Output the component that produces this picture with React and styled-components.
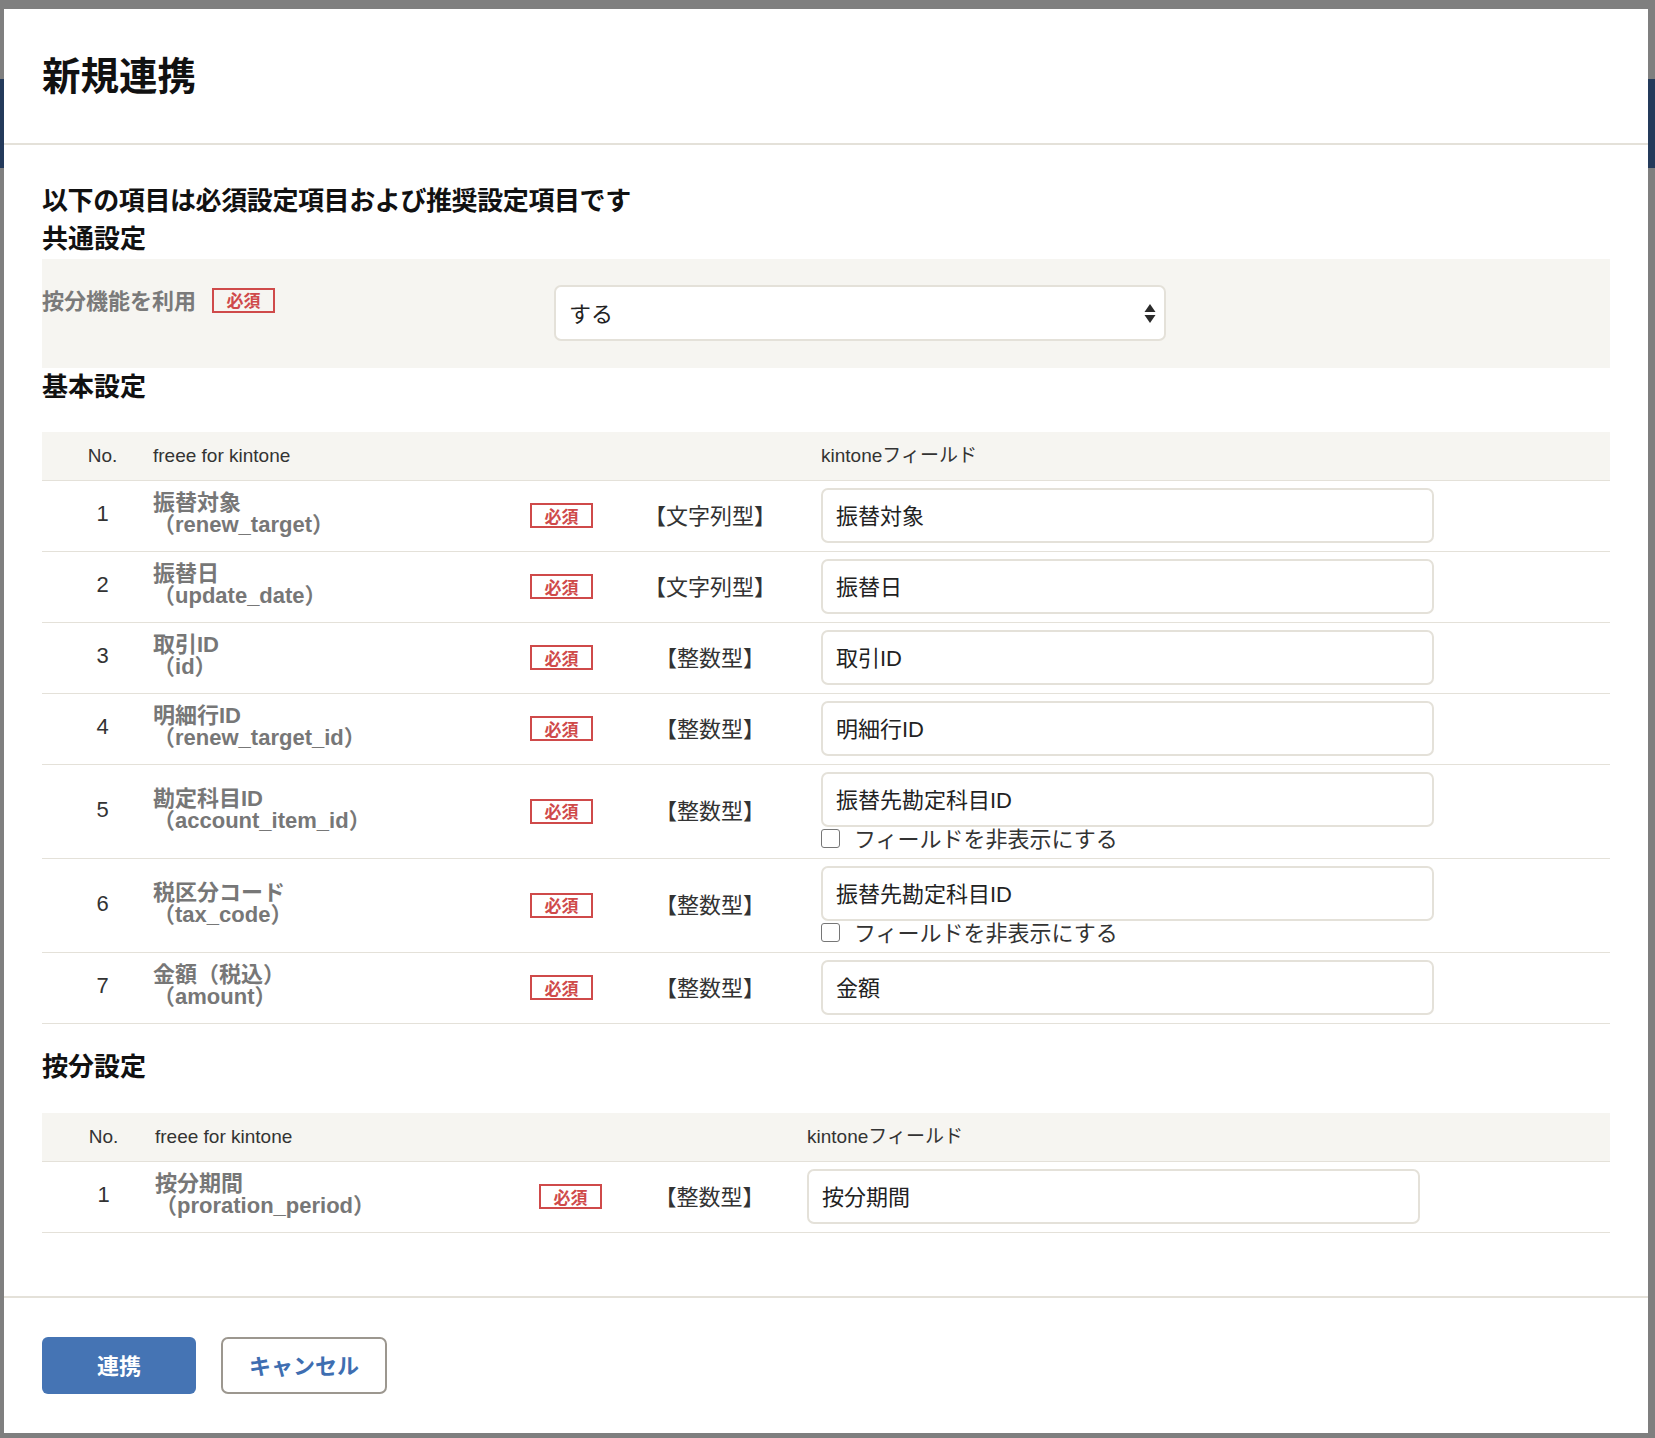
import React from 'react';
import styled, { createGlobalStyle } from 'styled-components';

const basicRows = [
  { no: 1, name: '振替対象', key: 'renew_target', type: '【文字列型】', field: '振替対象' },
  { no: 2, name: '振替日', key: 'update_date', type: '【文字列型】', field: '振替日' },
  { no: 3, name: '取引ID', key: 'id', type: '【整数型】', field: '取引ID' },
  { no: 4, name: '明細行ID', key: 'renew_target_id', type: '【整数型】', field: '明細行ID' },
  { no: 5, name: '勘定科目ID', key: 'account_item_id', type: '【整数型】', field: '振替先勘定科目ID', hide: true },
  { no: 6, name: '税区分コード', key: 'tax_code', type: '【整数型】', field: '振替先勘定科目ID', hide: true },
  { no: 7, name: '金額（税込）', key: 'amount', type: '【整数型】', field: '金額' },
];

const prorationRows = [
  { no: 1, name: '按分期間', key: 'proration_period', type: '【整数型】', field: '按分期間' },
];

const basicCols = '111px 377px 63px 228px 1fr';
const prorationCols = '113px 384px 64px 204px 1fr';

function MappingTable({ rows, cols, typePad }) {
  return (
    <Table>
      <HeadRow $cols={cols}>
        <NoCell>No.</NoCell>
        <HeadText>freee for kintone</HeadText>
        <span />
        <span />
        <HeadText $cjk>kintoneフィールド</HeadText>
      </HeadRow>
      {rows.map((r) => (
        <Row key={r.key} $cols={cols}>
          <NoCell $num>{r.no}</NoCell>
          <Name>
            <div>{r.name}</div>
            <div>（{r.key}）</div>
          </Name>
          <Badge>必須</Badge>
          <TypeCell $pad={typePad}>{r.type}</TypeCell>
          <FieldCell>
            <Field defaultValue={r.field} readOnly />
            {r.hide && (
              <HideLine>
                <Check type="checkbox" />
                <span>フィールドを非表示にする</span>
              </HideLine>
            )}
          </FieldCell>
        </Row>
      ))}
    </Table>
  );
}

function App() {
  return (
    <>
      <GlobalStyle />
      <Backdrop>
        <Modal>
          <Header>
            <Title>新規連携</Title>
          </Header>
          <Body>
            <Intro>以下の項目は必須設定項目および推奨設定項目です</Intro>
            <SectionTitle $top={0}>共通設定</SectionTitle>
            <Panel>
              <LabelGroup>
                <PanelLabel>按分機能を利用</PanelLabel>
                <Badge>必須</Badge>
              </LabelGroup>
              <Select>
                <span>する</span>
                <svg width="12" height="19" viewBox="0 0 12 19">
                  <path d="M6 0 L11.5 8 H0.5 Z" fill="#2b2b2b" />
                  <path d="M6 19 L11.5 11 H0.5 Z" fill="#2b2b2b" />
                </svg>
              </Select>
            </Panel>
            <SectionTitle $top={0} $bottom={26}>基本設定</SectionTitle>
            <MappingTable rows={basicRows} cols={basicCols} typePad={6} />
            <SectionTitle $top={24} $bottom={27}>按分設定</SectionTitle>
            <MappingTable rows={prorationRows} cols={prorationCols} typePad={9} />
          </Body>
          <Footer>
            <PrimaryButton>連携</PrimaryButton>
            <CancelButton>キャンセル</CancelButton>
          </Footer>
        </Modal>
      </Backdrop>
    </>
  );
}

export default App;

const GlobalStyle = createGlobalStyle`
  html, body {
    margin: 0;
    padding: 0;
  }
  body {
    background:
      linear-gradient(to bottom, #7f7f7f 0, #7f7f7f 79px, #243a5b 79px, #243a5b 168px, #7f7f7f 168px) no-repeat,
      #7f7f7f;
    font-family: 'Liberation Sans', 'Noto Sans CJK JP', sans-serif;
  }
`;

const Backdrop = styled.div`
  box-sizing: border-box;
  height: 1438px;
  padding: 9px 7px 5px 4px;
`;

const Modal = styled.div`
  height: 1424px;
  background: #fff;
  display: flex;
  flex-direction: column;
`;

const Header = styled.header`
  box-sizing: border-box;
  height: 136px;
  flex: none;
  display: flex;
  align-items: center;
  padding: 0 38px 6px;
  border-bottom: 2px solid #e4e1d9;
`;

const Title = styled.h1`
  margin: 0;
  font-size: 38.5px;
  font-weight: 700;
  color: #111;
`;

const Body = styled.main`
  flex: 1;
  padding: 37px 38px 0;
`;

const Intro = styled.p`
  margin: 0;
  font-size: 26px;
  line-height: 38px;
  letter-spacing: -0.4px;
  font-weight: 700;
  color: #111;
`;

const SectionTitle = styled.h2`
  margin: ${(p) => p.$top}px 0 ${(p) => p.$bottom || 1}px;
  font-size: 26px;
  line-height: 38px;
  font-weight: 700;
  color: #111;
`;

const Panel = styled.section`
  background: #f6f5f1;
  padding: 26px 0 27px;
  display: flex;
  align-items: flex-start;
`;

const LabelGroup = styled.div`
  width: 512px;
  display: flex;
  align-items: center;
  gap: 16px;
  height: 30px;
`;

const PanelLabel = styled.span`
  padding-bottom: 3px;
  font-size: 22px;
  font-weight: 700;
  color: #7a7a7a;
`;

const Badge = styled.span`
  box-sizing: border-box;
  width: 63px;
  height: 25px;
  padding-bottom: 1px;
  border: 2px solid #cf4a4a;
  color: #cf4a4a;
  font-size: 17px;
  font-weight: 700;
  display: flex;
  align-items: center;
  justify-content: center;
`;

const Select = styled.div`
  box-sizing: border-box;
  width: 612px;
  height: 56px;
  border: 2px solid #e4e1d9;
  border-radius: 7px;
  background: #fff;
  padding: 0 8px 0 13px;
  display: flex;
  align-items: center;
  justify-content: space-between;
  font-size: 22px;
  color: #222;

  span {
    padding-bottom: 3px;
  }
`;

const Table = styled.div`
  display: flex;
  flex-direction: column;
`;

const HeadRow = styled.div`
  display: grid;
  grid-template-columns: ${(p) => p.$cols};
  align-items: center;
  height: 48px;
  background: #f6f5f1;
  border-bottom: 1px solid #e4e1d9;
  font-size: 19px;
  color: #333;
`;

const HeadText = styled.span`
  white-space: nowrap;
  padding-bottom: ${(p) => (p.$cjk ? '5px' : '0')};
`;

const Row = styled.div`
  display: grid;
  grid-template-columns: ${(p) => p.$cols};
  align-items: center;
  padding: 7px 0 8px;
  border-bottom: 1px solid #e4e1d9;
`;

const NoCell = styled.span`
  text-align: center;
  padding-left: 10px;
  padding-bottom: ${(p) => (p.$num ? '3px' : '0')};
  font-size: ${(p) => (p.$num ? '22px' : '19px')};
  color: #333;
`;

const Name = styled.div`
  padding-bottom: 3px;
  font-size: 22px;
  line-height: 22px;
  font-weight: 700;
  color: #777;
  white-space: nowrap;
`;

const TypeCell = styled.span`
  text-align: center;
  padding-left: ${(p) => p.$pad}px;
  padding-bottom: 4px;
  font-size: 22px;
  color: #333;
`;

const FieldCell = styled.div`
  display: flex;
  flex-direction: column;
`;

const Field = styled.input`
  box-sizing: border-box;
  width: 613px;
  height: 55px;
  margin: 0;
  border: 2px solid #e4e1d9;
  border-radius: 7px;
  padding: 0 13px 4px;
  font-family: inherit;
  font-size: 22px;
  color: #222;
  background: #fff;
  outline: none;
`;

const HideLine = styled.label`
  display: flex;
  align-items: center;
  gap: 14px;
  height: 23px;
  font-size: 22px;
  color: #333;

  span {
    padding-bottom: 3px;
  }
`;

const Check = styled.input`
  appearance: none;
  box-sizing: border-box;
  width: 19px;
  height: 19px;
  margin: 0;
  border: 1px solid #767676;
  border-radius: 3px;
  background: #fff;
`;

const Footer = styled.footer`
  height: 135px;
  flex: none;
  border-top: 2px solid #e4e1d9;
  padding: 0 38px;
  display: flex;
  align-items: center;
  gap: 25px;
`;

const PrimaryButton = styled.button`
  width: 154px;
  height: 57px;
  padding: 0 0 4px;
  border: none;
  border-radius: 6px;
  background: #4574b4;
  color: #fff;
  font-family: inherit;
  font-size: 22px;
  font-weight: 700;
`;

const CancelButton = styled.button`
  width: 166px;
  height: 57px;
  padding: 0 0 4px;
  border: 2px solid #9c978f;
  border-radius: 7px;
  background: #fff;
  color: #3e6eb1;
  font-family: inherit;
  font-size: 22px;
  font-weight: 700;
`;
